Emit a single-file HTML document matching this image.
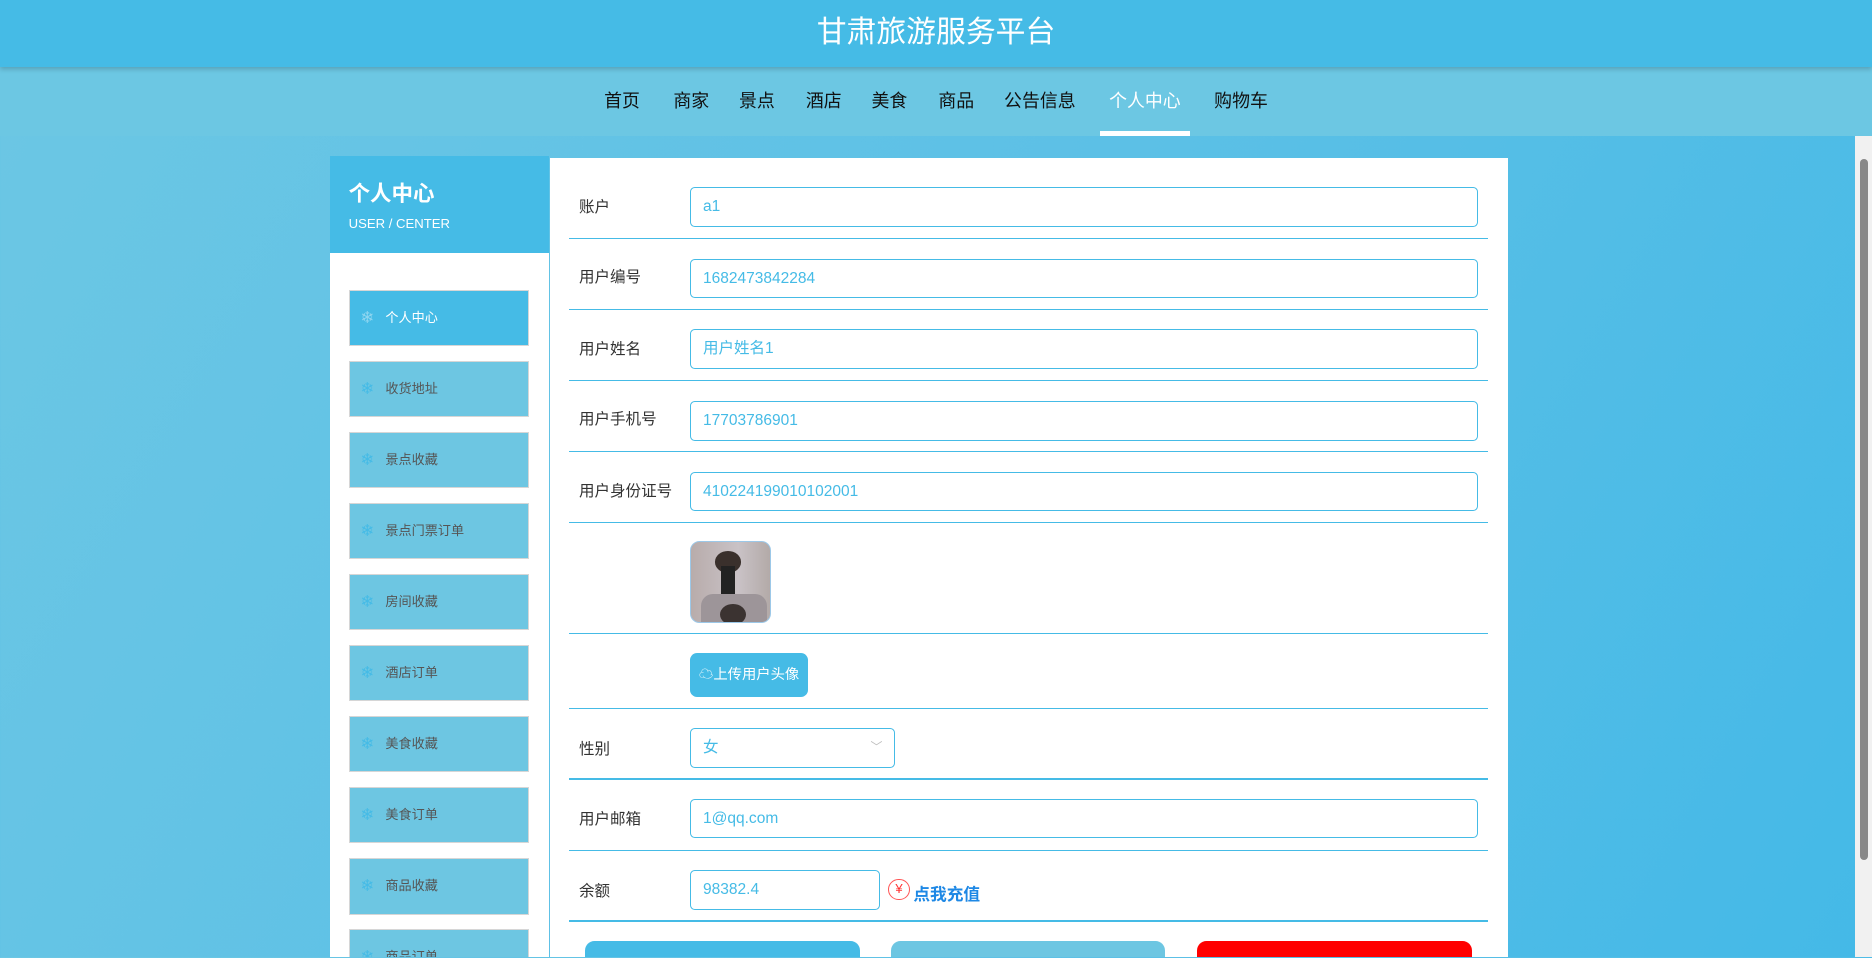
<!DOCTYPE html>
<html><head><meta charset="utf-8"><style>
html{zoom:1.19388;overflow:hidden;height:802px}
*{box-sizing:border-box;margin:0;padding:0}
body{width:1568px;height:802px;overflow:hidden;position:relative;font-family:"Liberation Sans","Noto Sans CJK SC",sans-serif;background:linear-gradient(120deg,#6cc7e4 0%,#5cc0e6 50%,#44b9e7 100%);}
.hdr{position:absolute;left:0;top:0;width:1568px;height:56px;background:#45bbe6;box-shadow:0 2px 4px rgba(0,0,0,.2);color:#fff;font-size:25px;text-align:center;line-height:56px;z-index:2}
.nav{position:absolute;left:0;top:56px;width:1568px;height:58px;background:#6cc7e3}
.nav span{position:absolute;top:17px;font-size:15px;color:#111}
.nav .act{color:#fff}
.uline{position:absolute;left:921px;top:54px;width:76px;height:4px;background:#fff}
.sb{position:absolute;left:1554px;top:114px;width:14px;height:688px;background:#f1f1f1}
.sb i{position:absolute;left:4px;top:19px;width:7px;height:587px;background:#888;border-radius:4px}
.side{position:absolute;left:276px;top:131px;width:184px;height:671px;background:#fff;overflow:hidden}
.side .h{height:81px;background:#45bbe6;color:#fff;padding:17px 16px}
.side .h b{font-size:18px;display:block}
.side .h small{font-size:11px;display:block;margin-top:7px}
.mi{position:absolute;left:16px;width:151px;height:47px;background:#6dc6e2;border:1px solid #d6d6d6;font-size:11px;color:#555;line-height:45px;padding-left:30px}
.mi:before{content:"❄";position:absolute;left:9px;top:0;color:#45bbe6;font-size:14px}
.mi.a{background:#45bbe6;color:#fff}
.mi.a:before{color:#8fd6f0}
.main{position:absolute;left:461px;top:132px;width:802px;height:670px;background:#fff;overflow:hidden}
.lb{position:absolute;left:24px;font-size:13px;color:#333}
.in{position:absolute;left:117px;width:660px;height:33px;border:1px solid #45bbe6;border-radius:4px;color:#45bbe6;font-size:13px;line-height:31px;padding-left:10px}
.ln{position:absolute;left:16px;width:769px;height:1px;background:#45bbe6}
.btn{position:absolute;top:656px;width:230px;height:30px;border-radius:8px 8px 0 0}
</style></head><body>
<div class="hdr">甘肃旅游服务平台</div>
<div class="nav">
<span style="left:506px">首页</span><span style="left:564px">商家</span><span style="left:619px">景点</span><span style="left:675px">酒店</span><span style="left:730px">美食</span><span style="left:786px">商品</span><span style="left:841px">公告信息</span><span class="act" style="left:929px">个人中心</span><span style="left:1017px">购物车</span>
<div class="uline"></div></div>
<div class="sb"><i></i></div>
<div class="side"><div class="h"><b>个人中心</b><small>USER / CENTER</small></div>
<div class="mi a" style="top:112px">个人中心</div>
<div class="mi" style="top:171px">收货地址</div>
<div class="mi" style="top:231px">景点收藏</div>
<div class="mi" style="top:290px">景点门票订单</div>
<div class="mi" style="top:350px">房间收藏</div>
<div class="mi" style="top:409px">酒店订单</div>
<div class="mi" style="top:469px">美食收藏</div>
<div class="mi" style="top:528px">美食订单</div>
<div class="mi" style="top:588px">商品收藏</div>
<div class="mi" style="top:647px">商品订单</div>
</div>
<div class="main">
<div class="lb" style="top:31px">账户</div><div class="in" style="top:25px">a1</div><div class="ln" style="top:67px"></div>
<div class="lb" style="top:90px">用户编号</div><div class="in" style="top:85px">1682473842284</div><div class="ln" style="top:127px"></div>
<div class="lb" style="top:150px">用户姓名</div><div class="in" style="top:144px">用户姓名1</div><div class="ln" style="top:186px"></div>
<div class="lb" style="top:209px">用户手机号</div><div class="in" style="top:204px">17703786901</div><div class="ln" style="top:246px"></div>
<div class="lb" style="top:269px">用户身份证号</div><div class="in" style="top:263px">410224199010102001</div><div class="ln" style="top:305px"></div>
<div style="position:absolute;left:117px;top:321px;width:68px;height:69px;border-radius:8px;border:1px solid #9cc8e8;overflow:hidden;background:linear-gradient(90deg,#b8acab,#c9c2c6 60%,#b3aaa8)">
<div style="position:absolute;left:20px;top:8px;width:22px;height:18px;border-radius:50%;background:#3a302c"></div>
<div style="position:absolute;left:25px;top:20px;width:12px;height:24px;background:#222"></div>
<div style="position:absolute;left:8px;top:44px;width:56px;height:26px;background:#9d9599;border-radius:10px 10px 0 0"></div>
<div style="position:absolute;left:24px;top:52px;width:22px;height:18px;border-radius:50%;background:#3b3331"></div></div>
<div class="ln" style="top:398px"></div>
<div style="position:absolute;left:117px;top:415px;width:99px;height:37px;border-radius:6px;background:#45bbe6;color:#fff;font-size:12px;line-height:37px;text-align:center">☁上传用户头像</div>
<div class="ln" style="top:461px"></div>
<div class="lb" style="top:485px">性别</div><div class="in" style="top:478px;width:172px">女<span style="position:absolute;right:10px;color:#bbb;font-size:10px">﹀</span></div><div class="ln" style="top:520px"></div>
<div class="lb" style="top:544px">用户邮箱</div><div class="in" style="top:537px">1@qq.com</div><div class="ln" style="top:580px"></div>
<div class="lb" style="top:604px">余额</div><div class="in" style="top:597px;width:159px">98382.4</div>
<div style="position:absolute;left:283px;top:604px;width:18px;height:18px;border:1.5px solid #f55;border-radius:50%;color:#f33;font-size:11px;text-align:center;line-height:15px">¥</div>
<div style="position:absolute;left:304px;top:606px;font-size:14px;color:#1e88e5;font-weight:bold">点我充值</div>
<div class="ln" style="top:639px"></div>
<div class="btn" style="left:29px;background:#45bbe6"></div>
<div class="btn" style="left:285px;background:#6dc6e2"></div>
<div class="btn" style="left:542px;background:#f00"></div>
</div>
</body></html>
